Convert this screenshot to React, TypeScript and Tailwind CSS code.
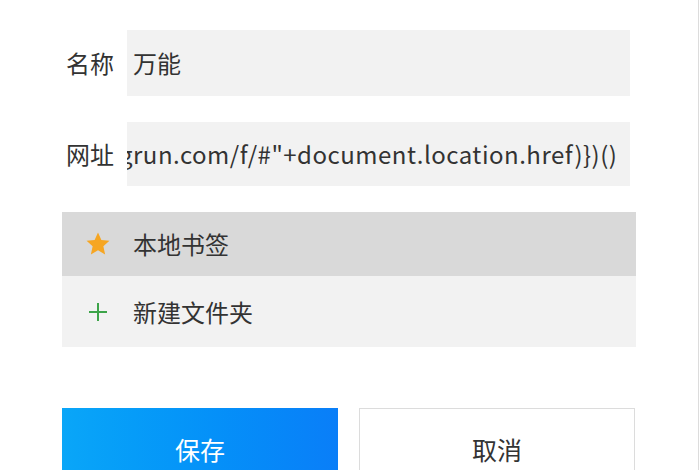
import React from "react";

const font = { fontFamily: '"Noto Sans CJK SC", "Noto Sans", sans-serif' };
const url = 'grun.com/f/#"+document.location.href)})()';

export default function App() {
  return (
    <div className="w-[700px] h-[470px] overflow-hidden bg-white" style={font}>
      <div className="w-[699px] h-[470px] border-r border-[#dcdcdc] pt-[30px] pl-[62px]">
        <div className="flex items-center h-[66px]">
          <div className="w-[65px] pl-[4px] text-[24px] text-[#333]">名称</div>
          <div className="w-[503px] h-[66px] bg-[#f2f2f2] flex items-center pl-[6px] text-[24px] text-[#333]">
            万能
          </div>
        </div>
        <div className="flex items-center h-[64px] mt-[26px]">
          <div className="w-[65px] pl-[4px] text-[24px] text-[#333]">网址</div>
          <div className="w-[503px] h-[64px] bg-[#f2f2f2] flex items-center overflow-hidden text-[24px] tracking-[0.5px] text-[#333] whitespace-nowrap">
            <span className="ml-[-8px]">{url}</span>
          </div>
        </div>
        <div className="w-[574px] mt-[26px]">
          <div className="h-[64px] bg-[#d9d9d9] flex items-center">
            <div className="w-[71px] flex justify-center">
              <svg width="28" height="28" viewBox="0 0 24 24">
                <path
                  d="M12 2.2l2.9 6.4 6.9.7-5.2 4.7 1.5 6.9L12 17.3l-6.1 3.6 1.5-6.9-5.2-4.7 6.9-.7z"
                  fill="#f6a623"
                />
              </svg>
            </div>
            <span className="text-[24px] text-[#333]">本地书签</span>
          </div>
          <div className="h-[71px] bg-[#f2f2f2] flex items-center">
            <div className="w-[71px] flex justify-center">
              <svg width="20" height="20" viewBox="0 0 20 20">
                <path d="M10 1v18M1 10h18" stroke="#3da449" strokeWidth="2" fill="none" />
              </svg>
            </div>
            <span className="text-[24px] text-[#333]">新建文件夹</span>
          </div>
        </div>
        <div className="flex gap-[21px] mt-[61px]">
          <div className="w-[276px] h-[84px] bg-gradient-to-r from-[#0aa6f8] to-[#0a7ef8] flex items-center justify-center text-[25px] text-white">
            保存
          </div>
          <div className="w-[276px] h-[84px] bg-white border border-[#dcdcdc] flex items-center justify-center text-[25px] text-[#333]">
            取消
          </div>
        </div>
      </div>
    </div>
  );
}
